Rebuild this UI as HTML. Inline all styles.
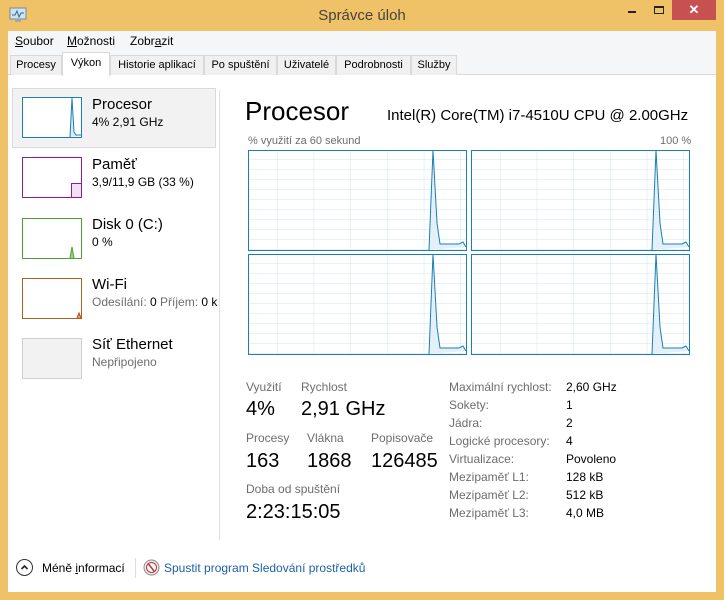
<!DOCTYPE html>
<html><head><meta charset="utf-8"><style>
*{margin:0;padding:0;box-sizing:border-box}
body{width:724px;height:600px;background:#f0c268;font-family:"Liberation Sans",sans-serif;position:relative;overflow:hidden;color:#000}
.a{position:absolute;white-space:nowrap}
.tab{position:absolute;top:55px;height:20px;border:1px solid #d9d9d9;border-bottom:none;background:#f0f0f0;font-size:11px;line-height:18px;padding:0 3px;color:#000;white-space:nowrap;overflow:hidden;text-align:center}
.g{color:#6d6d6d}
</style></head><body>
<svg class="a" style="left:9px;top:7px" width="18" height="16" viewBox="0 0 18 16"><rect x="1" y="1" width="16" height="11" fill="#cfe3f1" stroke="#7a8a99"/><polyline points="3,8 6,8 8,4 10,10 12,6 15,6" fill="none" stroke="#2a6aa8" stroke-width="1"/><rect x="6" y="12" width="6" height="3" fill="#9aa"/></svg>
<div class="a" style="left:0;width:724px;top:7px;text-align:center;font-size:15px;color:#444">Správce úloh</div>
<div class="a" style="left:628px;top:11px;width:8px;height:2px;background:#222"></div>
<div class="a" style="left:654px;top:6px;width:10px;height:8px;border:1px solid #222;border-top-width:2px"></div>
<div class="a" style="left:672px;top:0;width:44px;height:20px;background:#c75050;color:#fff;text-align:center;font-size:13px;line-height:19px;font-weight:bold">✕</div>
<div class="a" style="left:8px;top:31px;width:708px;height:561px;background:#fff"></div>
<div class="a" style="left:8px;top:31px;width:708px;height:22px;background:#f5f6f7"></div>
<div class="a" style="left:15px;top:34px;font-size:12px"><u>S</u>oubor</div>
<div class="a" style="left:67px;top:34px;font-size:12px"><u>M</u>ožnosti</div>
<div class="a" style="left:130px;top:34px;font-size:12px">Zobr<u>a</u>zit</div>
<div class="a" style="left:8px;top:53px;width:708px;height:22px;background:#f5f6f7;border-bottom:1px solid #d9d9d9"></div>
<div class="tab" style="left:10px;width:52px">Procesy</div>
<div class="tab" style="left:62px;top:52px;height:24px;width:48px;background:#fff;line-height:20px">Výkon</div>
<div class="tab" style="left:110px;width:94px">Historie aplikací</div>
<div class="tab" style="left:204px;width:73px">Po spuštění</div>
<div class="tab" style="left:277px;width:59px">Uživatelé</div>
<div class="tab" style="left:336px;width:75px">Podrobnosti</div>
<div class="tab" style="left:411px;width:46px">Služby</div>
<div class="a" style="left:12px;top:88px;width:204px;height:60px;background:#f2f2f2;border:1px solid #dadada"></div>
<div class="a" style="left:219px;top:90px;width:1px;height:450px;background:#e0e0e0"></div>
<svg class="a" style="left:22px;top:97px" width="60" height="41"><rect x="0.5" y="0.5" width="59" height="40" fill="#fff" stroke="#1a7fb5"/><polyline points="48,40 50,1 52,35 54,38 59,38" fill="#dbeaf5" stroke="#1a7fb5"/></svg>
<div class="a" style="left:92px;top:96px;font-size:15px">Procesor</div>
<div class="a" style="left:92px;top:115px;font-size:12px">4% 2,91 GHz</div>
<svg class="a" style="left:22px;top:157px" width="60" height="41"><rect x="0.5" y="0.5" width="59" height="40" fill="#fff" stroke="#8b1a96"/><rect x="49.5" y="26.5" width="10" height="14" fill="#f1e2f3" stroke="#8b1a96"/></svg>
<div class="a" style="left:92px;top:156px;font-size:15px">Paměť</div>
<div class="a" style="left:92px;top:175px;font-size:12px">3,9/11,9 GB (33 %)</div>
<svg class="a" style="left:22px;top:218px" width="60" height="41"><rect x="0.5" y="0.5" width="59" height="40" fill="#fff" stroke="#4da033"/><polyline points="48,40 50,29 52,40" fill="#9bd08a" stroke="#4da033"/></svg>
<div class="a" style="left:92px;top:216px;font-size:15px">Disk 0 (C:)</div>
<div class="a" style="left:92px;top:235px;font-size:12px">0 %</div>
<svg class="a" style="left:22px;top:278px" width="60" height="41"><rect x="0.5" y="0.5" width="59" height="40" fill="#fff" stroke="#a7651b"/><polyline points="55,40 57,35 59,40" fill="#e8a070" stroke="#c04010"/></svg>
<div class="a" style="left:92px;top:276px;font-size:15px">Wi-Fi</div>
<div class="a" style="left:92px;top:295px;font-size:12px;width:126px;overflow:hidden"><span class="g">Odesílání:</span> 0 <span class="g">Příjem:</span> 0 kb</div>
<div class="a" style="left:22px;top:338px;width:60px;height:41px;background:#f2f2f2;border:1px solid #d0d0d0"></div>
<div class="a" style="left:92px;top:336px;font-size:15px">Síť Ethernet</div>
<div class="a" style="left:92px;top:355px;font-size:12px"><span class="g">Nepřipojeno</span></div>
<div class="a" style="left:245px;top:96px;font-size:26px">Procesor</div>
<div class="a" style="left:387px;top:107px;font-size:15px">Intel(R) Core(TM) i7-4510U CPU @ 2.00GHz</div>
<div class="a g" style="left:248px;top:135px;font-size:11px">% využití za 60 sekund</div>
<div class="a g" style="left:660px;top:135px;font-size:11px">100 %</div>
<svg class="a" style="left:247px;top:149px" width="444" height="207">
<defs>
<pattern id="p" x="30" y="0" width="36.7" height="10" patternUnits="userSpaceOnUse"><path d="M0 0V10M0 0H36.7" stroke="#cfe4f1" stroke-width="1" fill="none"/></pattern>
<g id="b"><rect x="1.5" y="1.5" width="218" height="100" fill="url(#p)"/><polyline points="182,101 186,1 190,74 193,95 212,95 216,93 219,98" fill="#e4f0f8" stroke="#1a7fb5" stroke-width="1"/><rect x="1.5" y="1.5" width="218" height="100" fill="none" stroke="#1a7fb5"/></g>
</defs>
<use href="#b"/><use href="#b" x="223"/><use href="#b" y="104"/><use href="#b" x="223" y="104"/>
</svg>
<div class="a g" style="left:246px;top:380px;font-size:12px">Využití</div>
<div class="a g" style="left:301px;top:380px;font-size:12px">Rychlost</div>
<div class="a" style="left:246px;top:398px;font-size:20px">4%</div>
<div class="a" style="left:301px;top:398px;font-size:20px">2,91 GHz</div>
<div class="a g" style="left:246px;top:431px;font-size:12px">Procesy</div>
<div class="a g" style="left:307px;top:431px;font-size:12px">Vlákna</div>
<div class="a g" style="left:371px;top:431px;font-size:12px">Popisovače</div>
<div class="a" style="left:246px;top:450px;font-size:20px">163</div>
<div class="a" style="left:307px;top:450px;font-size:20px">1868</div>
<div class="a" style="left:371px;top:450px;font-size:20px">126485</div>
<div class="a g" style="left:246px;top:482px;font-size:12px">Doba od spuštění</div>
<div class="a" style="left:246px;top:501px;font-size:20px">2:23:15:05</div>
<div class="a g" style="left:449px;top:378px;font-size:12px;line-height:18px">Maximální rychlost:<br>Sokety:<br>Jádra:<br>Logické procesory:<br>Virtualizace:<br>Mezipaměť L1:<br>Mezipaměť L2:<br>Mezipaměť L3:</div>
<div class="a" style="left:566px;top:378px;font-size:12px;line-height:18px">2,60 GHz<br>1<br>2<br>4<br>Povoleno<br>128 kB<br>512 kB<br>4,0 MB</div>
<div class="a" style="left:16px;top:559px;width:17px;height:17px;border:1px solid #333;border-radius:50%"></div>
<svg class="a" style="left:20px;top:563px" width="9" height="9"><polyline points="1.5,6 4.5,3 7.5,6" fill="none" stroke="#222" stroke-width="1.6"/></svg>
<div class="a" style="left:42px;top:561px;font-size:12px">Méně <u>i</u>nformací</div>
<div class="a" style="left:135px;top:558px;width:1px;height:20px;background:#ddd"></div>
<svg class="a" style="left:143px;top:559px" width="17" height="17"><circle cx="8.5" cy="8.5" r="7.5" fill="#eee" stroke="#888"/><circle cx="8.5" cy="8.5" r="5" fill="#fff" stroke="#c03030"/><line x1="5.5" y1="5" x2="11" y2="12" stroke="#c03030" stroke-width="1.5"/></svg>
<div class="a" style="left:164px;top:561px;font-size:12px;color:#1e5fa8">Spustit program Sledování prostředků</div>
</body></html>
